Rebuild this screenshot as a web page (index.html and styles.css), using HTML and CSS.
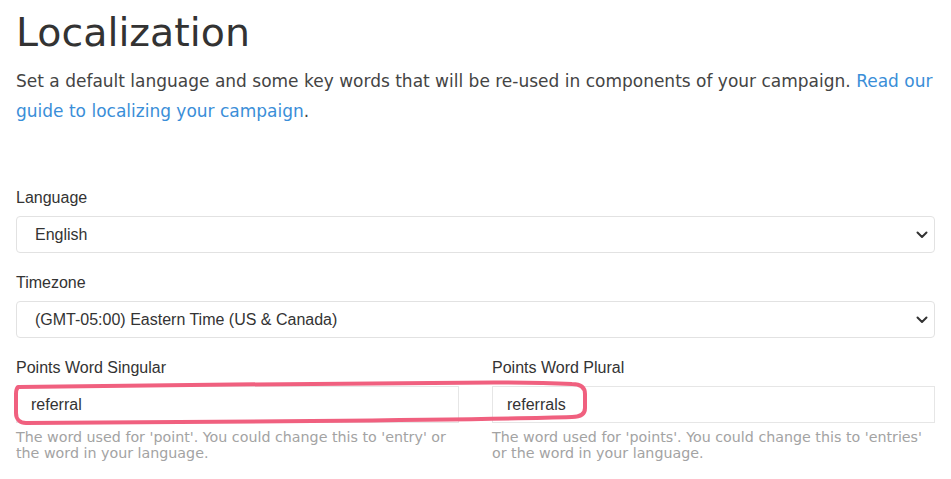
FILE: index.html
```html
<!DOCTYPE html>
<html lang="en">
<head>
<meta charset="utf-8">
<title>Localization</title>
<link rel="stylesheet" href="styles.css">
</head>
<body>
<main class="page">
  <h1 class="title">Localization</h1>
  <p class="intro">Set a default language and some key words that will be re-used in components of your campaign. <a class="link" href="#">Read our guide to localizing your campaign</a>.</p>

  <div class="field">
    <label class="label">Language</label>
    <div class="select">
      <span class="select-value">English</span>
      <svg class="chevron" width="12" height="8" viewBox="0 0 12 8"><path d="M1.5 1.5 L6 6 L10.5 1.5" fill="none" stroke="#333" stroke-width="2" stroke-linecap="round" stroke-linejoin="round"/></svg>
    </div>
  </div>

  <div class="field">
    <label class="label">Timezone</label>
    <div class="select">
      <span class="select-value">(GMT-05:00) Eastern Time (US &amp; Canada)</span>
      <svg class="chevron" width="12" height="8" viewBox="0 0 12 8"><path d="M1.5 1.5 L6 6 L10.5 1.5" fill="none" stroke="#333" stroke-width="2" stroke-linecap="round" stroke-linejoin="round"/></svg>
    </div>
  </div>

  <div class="row">
    <div class="col">
      <label class="label">Points Word Singular</label>
      <div class="input">referral</div>
      <p class="help">The word used for 'point'. You could change this to 'entry' or the word in your language.</p>
    </div>
    <div class="col">
      <label class="label">Points Word Plural</label>
      <div class="input">referrals</div>
      <p class="help">The word used for 'points'. You could change this to 'entries' or the word in your language.</p>
    </div>
    <svg class="annotation" width="580" height="48" viewBox="0 0 580 48">
      <path d="M6 7 C120 5 300 4 420 3 C480 2 540 3 560 4 C569 4 573 8 573 14 L573 28 C573 34 569 37 560 37 C500 39 400 40 300 41 C200 42 100 43 14 43 C8 43 4 39 4 33 L4 14 C4 10 5 8 6 7 Z" fill="none" stroke="#f0607f" stroke-width="4" stroke-linejoin="round"/>
    </svg>
  </div>
</main>
</body>
</html>
```
FILE: styles.css
```css
* { box-sizing: border-box; }
html, body { margin: 0; padding: 0; background: #fff; }
body { width: 951px; height: 479px; overflow: hidden; }

.page {
  padding: 0 16px;
  font-family: "DejaVu Sans", Verdana, sans-serif;
  color: #333;
}

.title {
  margin: 0;
  padding-top: 6px;
  font-family: "DejaVu Sans", Verdana, sans-serif;
  font-weight: normal;
  font-size: 39.5px;
  line-height: 52px;
  color: #333;
}

.intro {
  margin: 8px 0 0;
  font-size: 17px;
  line-height: 30px;
  color: #444;
}

.link { color: #3a8ed8; text-decoration: none; }

.field { margin-top: 20px; }
.intro + .field { margin-top: 62px; }

.label {
  display: block;
  font-family: "Liberation Sans", Arial, sans-serif;
  font-size: 16px;
  line-height: 20px;
  color: #333;
  margin-bottom: 8px;
}

.select {
  display: flex;
  align-items: center;
  justify-content: space-between;
  height: 37px;
  padding: 0 6px 0 18px;
  border: 1px solid #e2e2e2;
  border-radius: 4px;
  font-family: "Liberation Sans", Arial, sans-serif;
  font-size: 16px;
  color: #333;
}

.chevron { display: block; }

.row {
  position: relative;
  display: grid;
  grid-template-columns: 1fr 1fr;
  column-gap: 33px;
  margin-top: 20px;
}

.input {
  display: flex;
  align-items: center;
  height: 37px;
  padding: 0 14px;
  border: 1px solid #e6e6e6;
  font-family: "Liberation Sans", Arial, sans-serif;
  font-size: 16px;
  color: #333;
}

.help {
  margin: 6px 0 0;
  font-size: 14.25px;
  line-height: 16px;
  color: #a3a3a3;
}

.annotation {
  position: absolute;
  left: -4px;
  top: 22px;
}
```
